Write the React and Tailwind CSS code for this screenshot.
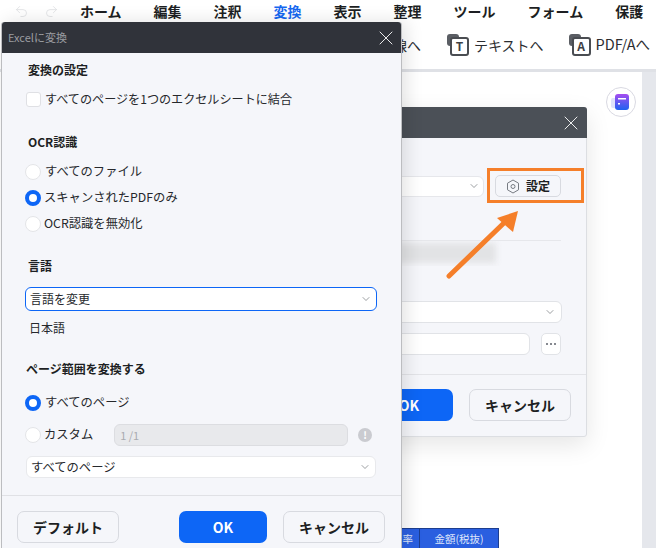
import React from 'react';
import { ChevronDown, Redo2, Undo2, X } from 'lucide-react';

const font = { fontFamily: '"Noto Sans CJK JP", "Noto Sans", sans-serif' };
const menus = ['ホーム', '編集', '注釈', '変換', '表示', '整理', 'ツール', 'フォーム', '保護'];

function ToolIcon({ letter }) {
  return (
    <div className="relative w-[22px] h-[22px] shrink-0">
      <div className="absolute left-0 top-0 w-[12px] h-[12px] rounded-[3px] bg-[#5b5e64]" />
      <div className="absolute left-[3px] top-[3px] w-[19px] h-[19px] rounded-[3px] border-2 border-[#4a4d52] bg-white flex items-center justify-center text-[12px] leading-none font-bold text-[#3d4045]">
        {letter}
      </div>
    </div>
  );
}

function Radio({ checked, label, labelClass = 'ml-[4px]' }) {
  return (
    <div className="flex items-center h-[20px]">
      {checked ? (
        <div className="w-[16px] h-[16px] rounded-full border-[4px] border-[#0d66f6] bg-white shrink-0" />
      ) : (
        <div className="w-[16px] h-[16px] rounded-full border border-[#e4e5e8] bg-white shrink-0" />
      )}
      <span className={`${labelClass} -translate-y-px text-[12.300px] leading-none text-[#26282c] whitespace-nowrap`}>{label}</span>
    </div>
  );
}

function Select({ children, className, textClass = 'text-[12px]' }) {
  return (
    <div className={`flex items-center justify-between bg-white rounded-[6px] border ${className}`}>
      <span className={`${textClass} leading-none text-[#26282c]`}>{children}</span>
      <ChevronDown size={12} strokeWidth={1.3} className="text-[#666a70]" />
    </div>
  );
}

function BackDialog() {
  return (
    <div className="absolute left-[300px] top-[107px] w-[287px] h-[330px] flex flex-col rounded-[3px] border border-[#dcdee2] bg-[#f5f6fa] shadow-[0_8px_24px_rgba(0,0,0,0.1)]">
      <div className="h-[31px] bg-[#4b5057] rounded-t-[3px] flex items-center justify-end pr-[4px] shrink-0 -mt-px -mx-px">
        <X size={24} strokeWidth={0.9} className="text-white" />
      </div>
      <div className="flex flex-col flex-1 pl-[60px] pr-[25px]">
        <div className="flex items-center mt-[37px] gap-[11px]">
          <Select className="w-[123px] h-[21px] pr-[3px] border-[#e6e7eb] shrink-0"></Select>
          <div className="w-[68px] h-[22px] flex items-center justify-center gap-[6px] rounded-[5px] border border-[#d8dae0] bg-[#f5f6fa]">
            <svg width="14" height="15" viewBox="0 0 14 15" fill="none" stroke="#777b82" strokeWidth="1">
              <path d="M7 1l5.5 3.200v6.600L7 14l-5.500-3.200V4.200z" />
              <circle cx="7" cy="7.500" r="2" />
            </svg>
            <span className="text-[12px] leading-none font-bold text-[#1d1f23]">設定</span>
          </div>
        </div>
        <div className="mt-[43px] h-[26px] w-[200px] border-t border-[#e6e7eb] overflow-hidden">
          <div className="mt-[2px] h-[20px] w-[135px] bg-[#e2e3e5] blur-[3px]" />
        </div>
        <Select className="mt-[35px] w-[201px] h-[22px] pr-[5px] border-[#e1e3e7]"></Select>
        <div className="mt-[10px] flex items-center gap-[11px]">
          <div className="w-[170px] h-[22px] rounded-[6px] border border-[#e1e3e7] bg-white" />
          <div className="w-[20px] h-[22px] rounded-[5px] border border-[#e1e3e7] bg-white flex items-center justify-center gap-[2px]">
            <span className="w-[2px] h-[2px] rounded-full bg-[#5e626b]" />
            <span className="w-[2px] h-[2px] rounded-full bg-[#5e626b]" />
            <span className="w-[2px] h-[2px] rounded-full bg-[#5e626b]" />
          </div>
        </div>
      </div>
      <div className="h-[62px] -ml-[1px] border-t border-[#e3e4e8] flex items-center justify-end gap-[16px] pr-[15px] shrink-0 pb-[1px]">
        <div className="w-[88px] h-[32px] rounded-[7px] bg-[#0d66f6] flex items-center justify-center text-[14px] font-bold text-white">OK</div>
        <div className="w-[102px] h-[32px] rounded-[7px] border border-[#d8dae0] flex items-center justify-center text-[14px] font-bold text-[#1d1f23]">キャンセル</div>
      </div>
    </div>
  );
}

function MainDialog() {
  return (
    <div className="absolute left-[1px] top-[22px] w-[401px] h-[526px] flex flex-col rounded-t-[3px] border-x border-[#bcbdc0] bg-[#f5f6fa] shadow-[4px_0_18px_rgba(0,0,0,0.12)]">
      <div className="h-[31px] bg-[#30333a] rounded-t-[3px] flex items-center justify-between pl-[6px] pr-[3px] shrink-0">
        <span className="text-[11px] leading-none text-[#9b9da1]">Excelに変換</span>
        <X size={24} strokeWidth={0.9} className="text-white" />
      </div>

      <div className="flex flex-col flex-1 pl-[23px] pr-[24px]">
        <h3 className="mt-[10px] pl-[3px] text-[12px] leading-[14px] font-bold text-[#1d1f23]">変換の設定</h3>
        <div className="mt-[14px] pl-[1px] flex items-center h-[16px]">
          <div className="w-[15px] h-[15px] rounded-[3px] border border-[#dfe0e4] bg-white shrink-0" />
          <span className="ml-[4px] text-[12.100px] leading-none text-[#26282c] whitespace-nowrap">すべてのページを1つのエクセルシートに結合</span>
        </div>

        <h3 className="mt-[28px] pl-[3px] text-[12px] leading-[14px] font-bold text-[#1d1f23]">OCR認識</h3>
        <div className="mt-[13px] flex flex-col gap-[6px]">
          <Radio label="すべてのファイル" />
          <Radio checked label="スキャンされたPDFのみ" labelClass="ml-[3px]" />
          <Radio label="OCR認識を無効化" labelClass="ml-[3px]" />
        </div>

        <h3 className="mt-[25px] pl-[3px] text-[12px] leading-[14px] font-bold text-[#1d1f23]">言語</h3>
        <Select className="mt-[14px] w-[352px] h-[24px] px-[4px] border-[#0d66f6]">言語を変更</Select>
        <p className="mt-[10px] pl-[4px] text-[12px] leading-[14px] text-[#26282c]">日本語</p>

        <h3 className="mt-[27px] pl-[1px] text-[12px] leading-[14px] font-bold text-[#1d1f23]">ページ範囲を変換する</h3>
        <div className="mt-[17px]">
          <Radio checked label="すべてのページ" />
        </div>
        <div className="mt-[11px] flex items-center">
          <Radio label="カスタム" labelClass="ml-[3px]" />
          <div className="ml-[21px] w-[234px] h-[22px] rounded-[6px] border border-[#dcdde1] bg-[#e8e9ec] flex items-center pl-[5px] text-[11px] text-[#a9abb0]">1 /1</div>
          <div className="ml-[10px] w-[14px] h-[14px] rounded-full bg-[#cacbd0] flex items-center justify-center text-[10px] leading-none font-bold text-white">!</div>
        </div>
        <Select className="mt-[10px] ml-[1px] w-[350px] h-[22px] px-[4px] border-[#e8e9ec]" textClass="text-[12.300px]">すべてのページ</Select>
      </div>

      <div className="h-[53px] border-t border-[#e0e1e5] flex items-start pl-[15px] pt-[15px] shrink-0">
        <div className="w-[102px] h-[32px] rounded-[7px] border border-[#d8dae0] flex items-center justify-center text-[14px] font-bold text-[#1d1f23]">デフォルト</div>
        <div className="ml-[60px] w-[88px] h-[32px] rounded-[7px] bg-[#0d66f6] flex items-center justify-center text-[14px] font-bold text-white">OK</div>
        <div className="ml-[16px] w-[102px] h-[32px] rounded-[7px] border border-[#d8dae0] flex items-center justify-center text-[14px] font-bold text-[#1d1f23]">キャンセル</div>
      </div>
    </div>
  );
}

export default function App() {
  return (
    <div className="relative w-[656px] h-[548px] overflow-hidden bg-white flex flex-col" style={font}>
      {/* Menu */}
      <div className="h-[22px] flex items-center shrink-0">
        <div className="flex items-center gap-[15px] pl-[14px] w-[80px]">
          <Undo2 size={15} strokeWidth={1.2} className="text-[#dcdde0]" />
          <Redo2 size={15} strokeWidth={1.2} className="text-[#dcdde0]" />
        </div>
        <div className="flex gap-8">
          {menus.map((m) => (
            <span key={m} className={`text-[14px] leading-none font-bold ${m === '変換' ? 'text-[#1668f0]' : 'text-[#1d1f23]'}`}>{m}</span>
          ))}
        </div>
      </div>

      {/* Toolbar */}
      <div className="h-[50px] flex items-center pl-[393px] pb-[2px] border-b-[3px] border-[#dfe1e6] shrink-0">
        <span className="w-[54px] text-[14px] leading-none text-[#2b2d31] whitespace-nowrap">線へ</span>
        <ToolIcon letter="T" />
        <span className="ml-[5px] text-[14px] leading-none text-[#2b2d31]">テキストへ</span>
        <div className="ml-[25px]"><ToolIcon letter="A" /></div>
        <span className="ml-[5px] text-[14.500px] leading-none text-[#2b2d31]">PDF/Aへ</span>
      </div>

      {/* Page */}
      <div className="flex flex-1 min-h-0">
        <div className="flex-1 flex justify-end pr-[6px] pt-[15px]">
          <div className="w-[30px] h-[30px] rounded-full border border-[#d9d9e2] bg-white flex items-center justify-center">
            <svg width="20" height="18" viewBox="0 0 20 18">
              <rect x="0" y="5" width="8" height="10" rx="2" fill="#dfe2fb" />
              <defs>
                <linearGradient id="lg" x1="0" y1="0" x2="0" y2="1">
                  <stop offset="0" stopColor="#a64df0" />
                  <stop offset="1" stopColor="#1f62f0" />
                </linearGradient>
              </defs>
              <rect x="4" y="1" width="14" height="16" rx="3" fill="url(#lg)" />
              <rect x="7" y="5" width="8" height="1.500" fill="#fff" />
              <rect x="7" y="10" width="2" height="1.500" fill="#fff" />
            </svg>
          </div>
        </div>
        <div className="w-[14px] bg-[#e5e7ec]" />
      </div>

      <BackDialog />

      {/* Table header behind the dialogs */}
      <div className="absolute left-[400px] top-[528px] h-[20px] w-[99px] flex bg-[#2a5fe0] border-t border-r border-[#1d3e8f] text-[10.500px] leading-[19px] text-[#dfe6fb]">
        <div className="w-[20px] border-r border-[#1d3e8f] text-right pr-[6px]">率</div>
        <div className="flex-1 text-center">金額(税抜)</div>
      </div>

      {/* Highlight */}
      <div className="absolute left-[487px] top-[168px] w-[97px] h-[35px] border-[3px] border-[#f57f2a]" />
      <svg className="absolute left-[440px] top-[205px]" width="85" height="80" viewBox="0 0 85 80">
        <path d="M9 71L66 16" stroke="#f57f2a" strokeWidth="5" strokeLinecap="round" />
        <path d="M78 6L57 13 L73 27z" fill="#f57f2a" />
      </svg>

      <MainDialog />
    </div>
  );
}
